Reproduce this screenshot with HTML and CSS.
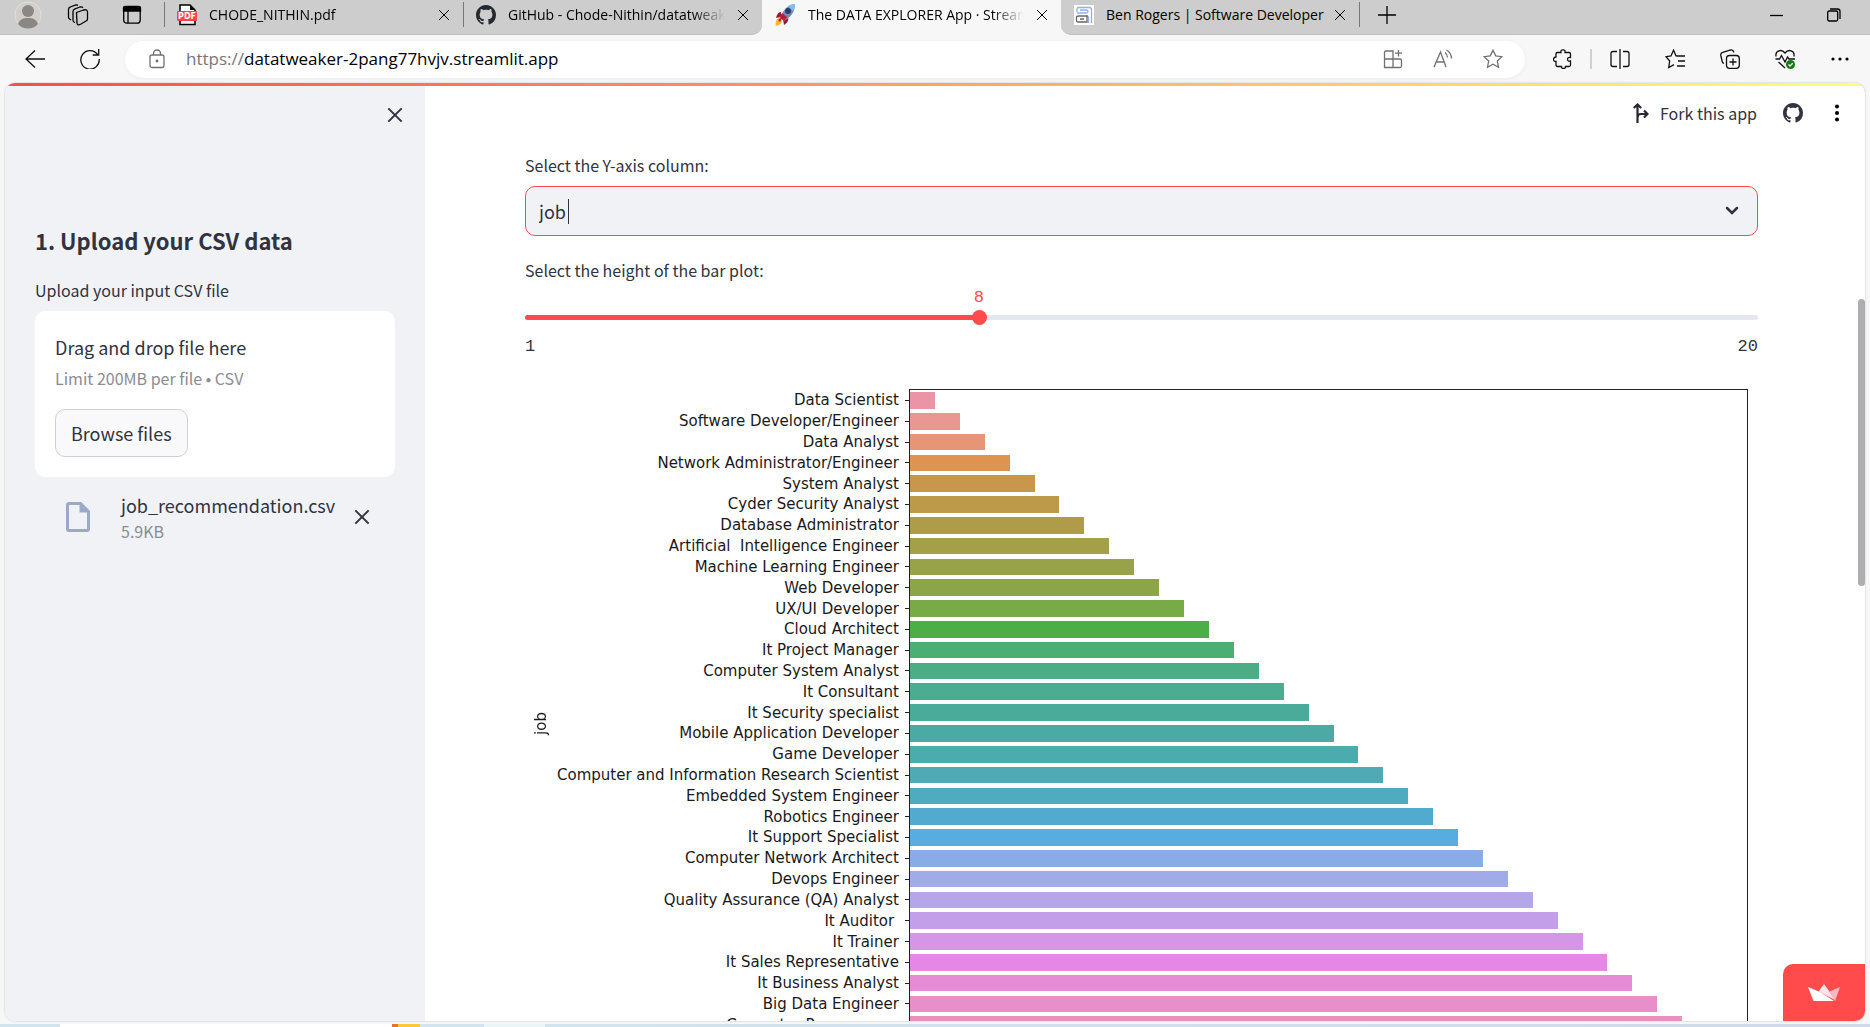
FILE: index.html
```html
<!DOCTYPE html>
<html lang="en">
<head>
<meta charset="utf-8">
<title>The DATA EXPLORER App · Streamlit</title>
<link rel="stylesheet" href="styles.css">
</head>
<body>
<svg class="defs" aria-hidden="true">
  <symbol id="github" viewBox="0 0 16 16"><path d="M8 0C3.58 0 0 3.58 0 8c0 3.54 2.29 6.53 5.47 7.59.4.07.55-.17.55-.38 0-.19-.01-.82-.01-1.49-2.01.37-2.53-.49-2.69-.94-.09-.23-.48-.94-.82-1.13-.28-.15-.68-.52-.01-.53.63-.01 1.08.58 1.23.82.72 1.21 1.87.87 2.33.66.07-.52.28-.87.51-1.07-1.78-.2-3.64-.89-3.64-3.95 0-.87.31-1.59.82-2.15-.08-.2-.36-1.02.08-2.12 0 0 .67-.21 2.2.82.64-.18 1.32-.27 2-.27s1.36.09 2 .27c1.53-1.04 2.2-.82 2.2-.82.44 1.1.16 1.92.08 2.12.51.56.82 1.27.82 2.15 0 3.07-1.87 3.75-3.65 3.95.29.25.54.73.54 1.48 0 1.07-.01 1.93-.01 2.2 0 .21.15.46.55.38A8.01 8.01 0 0 0 16 8c0-4.42-3.58-8-8-8z"/></symbol>
  <symbol id="cross" viewBox="0 0 12 12"><path d="M1 1l10 10M11 1L1 11" fill="none" stroke="currentColor"/></symbol>
</svg>

<header class="tabstrip">
  <div class="strip strip-left">
    <button class="strip-icon" aria-label="Profile">
      <svg width="28" height="28" viewBox="0 0 28 28"><circle cx="14" cy="14" r="13" fill="#d2cfcb" stroke="#e2e0dc"/><circle cx="14" cy="10" r="6" fill="#8b8784"/><path d="M4 23c2-5 5-6 10-6s8 1 10 6c-5 6-15 6-20 0z" fill="#8b8784"/></svg>
    </button>
    <button class="strip-icon" aria-label="Workspaces">
      <svg class="line" width="22" height="22" viewBox="0 0 22 22"><path d="M9.500 8.500l7-2.500q4-1 4 2v7q0 1.500-1.500 2l-5 3q-4 2-4-1z"/><path d="M8 18.500l-1-.5q-1-.6-1-2V7.500q0-2 2-2.700L13 3q2-.5 3 .7M4 16l-1.500-1q-1-.6-1-2V5.500q0-2 2-2.700L8.500 1q1.500-.4 2.500.4"/></svg>
    </button>
    <button class="strip-icon" aria-label="Tab actions">
      <svg class="line" width="20" height="20" viewBox="0 0 20 20"><rect x="1.700" y="1.700" width="16.500" height="16.500" rx="3"/><path d="M1.500 2.500q0-1 2-1h13q2 0 2 1V6h-17z" fill="#000"/><path d="M6 6v12"/></svg>
    </button>
    <nav class="tabs" aria-label="Tabs">
      <div class="tab">
        <svg width="20" height="22" viewBox="0 0 20 22"><path d="M3 1h10l5 5v14.500H3z" fill="#fff" stroke="#000" stroke-width="1.500"/><path d="M13 1v5h5z" fill="#000"/><rect y="7" width="20" height="10" rx="1" fill="#ff4342"/><text x="10" y="15" class="pdf-mark">PDF</text></svg>
        <a href="#pdf">CHODE_NITHIN.pdf</a>
        <button aria-label="Close tab"><svg width="12" height="12"><use href="#cross"/></svg></button>
      </div>
      <div class="tab">
        <svg width="20" height="20" fill="#24292f"><use href="#github"/></svg>
        <a href="#github-tab">GitHub - Chode-Nithin/datatweaker</a>
        <button aria-label="Close tab"><svg width="12" height="12"><use href="#cross"/></svg></button>
      </div>
    </nav>
  </div>
  <div class="tab tab-active">
    <svg width="22" height="24" viewBox="0 0 22 24"><path d="M2 23c-1-5 1-8 4-8l2 3c0 3-3 4-6 5z" fill="#ffb636"/><path d="M7 9c-3 0-4 3-5 6l5-1zM14 14c1 4-1 6-4 8l-1-6z" fill="#a0172c"/><path d="M21 1c-6 0-11 5-15 13l4 4c7-4 11-9 11-17z" fill="#6f8fb0"/><path d="M21 1c-3 0-5 1-7 2l5 5c1-2 2-4 2-7z" fill="#7fc0f0"/><path d="M6 14l2-4 5 4-3 4z" fill="#be1931"/><circle cx="14" cy="8" r="3" fill="#2b3b70"/><path d="M4 17l6-5-4 7z" fill="#be1931"/></svg>
    <a href="#app">The DATA EXPLORER App · Streamlit</a>
    <button aria-label="Close tab"><svg width="12" height="12"><use href="#cross"/></svg></button>
  </div>
  <div class="strip strip-right">
    <div class="tab tab-last">
      <svg width="20" height="20" viewBox="0 0 20 20"><path fill="#fff" d="M0 0h20v20H0z"/><g fill="none" stroke="#8fb0ee" stroke-width="1.300"><path d="M3 7V4q0-1.500 2-1.500h10q2.500 0 2.500 2V18M14.500 18v-5q0-2-2-2M3 8h9q2 0 2-1.500T12 5H6"/></g><path d="M5 11h8v6H4q-1.500 0-1.500-1.500v-3Q2.500 11 5 11zm1 3h4" fill="none" stroke="#666" stroke-width="1.300"/></svg>
      <a href="#ben">Ben Rogers | Software Developer</a>
      <button aria-label="Close tab"><svg width="12" height="12"><use href="#cross"/></svg></button>
    </div>
    <button class="new-tab" aria-label="New tab"><svg class="line" width="18" height="18" viewBox="0 0 18 18"><path d="M9 0v18M0 9h18"/></svg></button>
    <div class="window-controls">
      <button aria-label="Minimize"><svg class="line" width="14" height="14" viewBox="0 0 14 14"><path d="M0 7.500h13"/></svg></button>
      <button aria-label="Restore"><svg class="line" width="14" height="14" viewBox="0 0 14 14"><rect x=".7" y="3" width="10" height="10" rx="1.500"/><path d="M3 1h7.500Q13 1 13 3.500V11"/></svg></button>
    </div>
  </div>
</header>

<div class="toolbar">
  <button class="tool" aria-label="Back"><svg class="line" width="20" height="20" viewBox="0 0 20 20"><path d="M20 10H1M10 1.500L1 10l9 8.500"/></svg></button>
  <button class="tool" aria-label="Refresh"><svg class="line" width="20" height="20" viewBox="0 0 20 20"><path d="M17.500 5.500A9.200 9.200 0 1 0 19.200 10M18.700 0v6h-6"/></svg></button>
  <form class="address">
    <svg class="line" width="16" height="20" viewBox="0 0 16 20"><rect x="1" y="6" width="14" height="12.500" rx="2"/><path d="M4.500 6V4.500a3.500 3.500 0 0 1 7 0V6"/><circle cx="8" cy="12" r=".8" fill="currentColor"/></svg>
    <a class="url" href="#app"><span>https://</span>datatweaker-2pang77hvjv.streamlit.app</a>
    <button type="button" aria-label="Install app"><svg class="line" width="20" height="20" viewBox="0 0 20 20"><path d="M1.500 18.500v-15q0-1.500 1.500-1.500h7v16.500zM1.500 10H17q1.500 0 1.500 1.500V17q0 1.500-1.500 1.500H3q-1.500 0-1.500-1.500M15.500 1v6.500M12 4.200h7"/></svg></button>
    <button type="button" aria-label="Read aloud"><svg class="line" width="20" height="20" viewBox="0 0 20 20"><path d="M1 18L7.500 3 13 18M3.200 13h8.300M12 3.500q2.500 2 2.500 5M13.500 1q5 3 5 8.500"/></svg></button>
    <button type="button" aria-label="Favorite"><svg class="line" width="20" height="20" viewBox="0 0 20 20"><path d="M10 1.200l2.700 5.700 6.200.8-4.600 4.300 1.200 6.200-5.500-3-5.500 3L5.700 12 1.100 7.700l6.200-.8z"/></svg></button>
  </form>
  <button class="tool" aria-label="Extensions"><svg class="line" width="20" height="20" viewBox="0 0 20 20"><path d="M4 3.500h4q-.5-2.700 2-2.700t2 2.700h4q1.500 0 1.500 1.500v3.500q-3-.5-3 1.800t3 1.700V16q0 1.500-1.500 1.500h-3.500q.2 2-2 2t-2-2H4.500Q3 17.500 3 16v-3.500q-2.500 0-2.500-2.200T3 8V5q0-1.500 1-1.500z"/></svg></button>
  <span class="divider"></span>
  <button class="tool" aria-label="Split screen"><svg class="line" width="20" height="20" viewBox="0 0 20 20"><path d="M10 0v20M7 2.500H3Q1 2.500 1 4.500v11q0 2 2 2h4M13 2.500h4q2 0 2 2v11q0 2-2 2h-4"/></svg></button>
  <button class="tool" aria-label="Favorites"><svg class="line" width="20" height="20" viewBox="0 0 20 20"><path d="M13 7l-2-.2-2.500-5.600L6 6.900 1 7.700 4.700 12l-1 6.500L9 15.600M13 7h7M13 12h7M12 17h8"/></svg></button>
  <button class="tool" aria-label="Collections"><svg class="line" width="20" height="20" viewBox="0 0 20 20"><rect x="6.500" y="6.500" width="12.800" height="12.800" rx="3"/><path d="M13 9.500v7M9.500 13h7M4 14.500Q2.500 14 2.200 12.500L.8 6.500Q.3 4 2.700 3.300l8-2.300q2.300-.5 3.200 2.500"/></svg></button>
  <button class="tool" aria-label="Browser essentials"><svg class="line" width="20" height="20" viewBox="0 0 20 20"><path d="M.5 10h4l2-3.500L10 13l2.500-5 1.500 2h6M1 7.500C0 1.500 6.500-.5 10 4c3.500-4.500 10-2.500 9 3.500M3.500 13l6.500 6"/><circle cx="15.500" cy="15.500" r="4.500" fill="#107c10" stroke="none"/><path d="M13.500 15.500l1.500 1.500 2.700-2.700" stroke="#fff"/></svg></button>
  <button class="tool" aria-label="Settings and more"><svg width="18" height="4" viewBox="0 0 18 4"><circle cx="2" cy="2" r="1.600"/><circle cx="9" cy="2" r="1.600"/><circle cx="16" cy="2" r="1.600"/></svg></button>
</div>

<div class="viewport">
  <div class="decoration"></div>
  <aside class="sidebar">
    <button class="sidebar-close" aria-label="Close sidebar"><svg class="bold" width="16" height="16"><use href="#cross"/></svg></button>
    <h2>1. Upload your CSV data</h2>
    <label for="browse">Upload your input CSV file</label>
    <section class="dropzone">
      <p>Drag and drop file here</p>
      <small>Limit 200MB per file • CSV</small>
      <button id="browse">Browse files</button>
    </section>
    <div class="file">
      <svg width="24" height="30" viewBox="0 0 24 30"><path d="M3 1.500h11.500l8 8V27q0 1.500-1.500 1.500H3Q1.500 28.500 1.500 27V3Q1.500 1.500 3 1.500z" fill="none" stroke="#9aa9c8" stroke-width="3"/><path d="M13.500 1v9.500H23z" fill="#9aa9c8"/></svg>
      <div class="file-name">
        <p>job_recommendation.csv</p>
        <small>5.9KB</small>
      </div>
      <button aria-label="Remove file"><svg class="bold" width="16" height="16"><use href="#cross"/></svg></button>
    </div>
  </aside>

  <main>
    <div class="app-bar">
      <a href="#fork"><svg width="16" height="20" viewBox="0 0 16 20"><path d="M4.500 20V2M.8 5l3.700-3.500L8.200 5M4.500 14.500q0-3.500 3.500-3.500h6M11 7.500l3.500 3.500-3.500 3.500" fill="none" stroke="#262730" stroke-width="2.200"/></svg>Fork this app</a>
      <a href="#source" aria-label="View source"><svg width="20" height="20"><use href="#github"/></svg></a>
      <button aria-label="Menu"><svg width="6" height="18" viewBox="0 0 6 18"><circle cx="3" cy="2.500" r="2"/><circle cx="3" cy="9" r="2"/><circle cx="3" cy="15.500" r="2"/></svg></button>
    </div>

    <div class="content">
      <label for="y-axis">Select the Y-axis column:</label>
      <div class="select">
        <select id="y-axis"><option>job</option></select>
        <span class="caret"></span>
        <svg width="14" height="10" viewBox="0 0 14 10"><path d="M2 2l5 5 5-5" fill="none" stroke="#31333f" stroke-width="2.500" stroke-linecap="round"/></svg>
      </div>

      <label for="height">Select the height of the bar plot:</label>
      <div class="slider">
        <output for="height">8</output>
        <input id="height" type="range" min="1" max="20" value="8">
      </div>
      <div class="slider-ends"><span>1</span><span>20</span></div>

      <figure class="plot">
        <figcaption>job</figcaption>
        <ol class="names">
          <li>Data Scientist</li>
          <li>Software Developer/Engineer</li>
          <li>Data Analyst</li>
          <li>Network Administrator/Engineer</li>
          <li>System Analyst</li>
          <li>Cyder Security Analyst</li>
          <li>Database Administrator</li>
          <li>Artificial  Intelligence Engineer</li>
          <li>Machine Learning Engineer</li>
          <li>Web Developer</li>
          <li>UX/UI Developer</li>
          <li>Cloud Architect</li>
          <li>It Project Manager</li>
          <li>Computer System Analyst</li>
          <li>It Consultant</li>
          <li>It Security specialist</li>
          <li>Mobile Application Developer</li>
          <li>Game Developer</li>
          <li>Computer and Information Research Scientist</li>
          <li>Embedded System Engineer</li>
          <li>Robotics Engineer</li>
          <li>It Support Specialist</li>
          <li>Computer Network Architect</li>
          <li>Devops Engineer</li>
          <li>Quality Assurance (QA) Analyst</li>
          <li>It Auditor </li>
          <li>It Trainer</li>
          <li>It Sales Representative</li>
          <li>It Business Analyst</li>
          <li>Big Data Engineer</li>
          <li>Computer Programmer</li>
        </ol>
        <div class="bars">
          <i style="width:2.98%;background:#eb94a5"></i>
          <i style="width:5.95%;background:#ea9691"></i>
          <i style="width:8.93%;background:#e69577"></i>
          <i style="width:11.9%;background:#de944e"></i>
          <i style="width:14.88%;background:#c9974c"></i>
          <i style="width:17.86%;background:#bc9a4a"></i>
          <i style="width:20.83%;background:#af9c49"></i>
          <i style="width:23.81%;background:#a49f49"></i>
          <i style="width:26.79%;background:#98a248"></i>
          <i style="width:29.76%;background:#8ca647"></i>
          <i style="width:32.74%;background:#78ab47"></i>
          <i style="width:35.71%;background:#4caf45"></i>
          <i style="width:38.69%;background:#4bae72"></i>
          <i style="width:41.67%;background:#4aad85"></i>
          <i style="width:44.64%;background:#4aac91"></i>
          <i style="width:47.62%;background:#4aab9b"></i>
          <i style="width:50.6%;background:#4baba4"></i>
          <i style="width:53.57%;background:#4cabac"></i>
          <i style="width:56.55%;background:#4eabb5"></i>
          <i style="width:59.52%;background:#4fabc0"></i>
          <i style="width:62.5%;background:#52abce"></i>
          <i style="width:65.48%;background:#58acdf"></i>
          <i style="width:68.45%;background:#88ade6"></i>
          <i style="width:71.43%;background:#a2abe9"></i>
          <i style="width:74.4%;background:#b5a6ea"></i>
          <i style="width:77.38%;background:#c49fe9"></i>
          <i style="width:80.36%;background:#d496e6"></i>
          <i style="width:83.33%;background:#e588e5"></i>
          <i style="width:86.31%;background:#e68bd6"></i>
          <i style="width:89.29%;background:#e88ec9"></i>
          <i style="width:92.26%;background:#e991be"></i>
        </div>
      </figure>
    </div>
    <a class="badge" href="#streamlit" aria-label="Hosted with Streamlit"><svg width="34" height="18" viewBox="0 0 34 18"><path d="M1 3l12 5 14 9H6.500z" fill="#fff"/><path d="M11.500 7.500L17 0l5.500 7.500L28 16z" fill="#ffe1e8"/><path d="M22.500 7.500L33 3l-5 14z" fill="#ffb8c2"/></svg></a>
    <span class="scroll-thumb"></span>
  </main>
</div>
<div class="desktop-edge"></div>
</body>
</html>
```
FILE: styles.css
```css
* { box-sizing: border-box; }

body {
  margin: 0;
  height: 100vh;
  display: flex;
  flex-direction: column;
  overflow: hidden;
  background: #f7f7f7;
  color: #31333f;
  font-family: "Noto Sans CJK JP", "Noto Sans", sans-serif;
  font-size: 16px;
  line-height: 24px;
}

button {
  display: flex;
  align-items: center;
  justify-content: center;
  padding: 0;
  border: 0;
  background: none;
  color: inherit;
  font: inherit;
}

a { color: inherit; text-decoration: none; }
p, h2, ol, figure { margin: 0; padding: 0; }
svg { display: block; flex: none; }
.defs { position: absolute; width: 0; height: 0; }
.line { fill: none; stroke: currentColor; stroke-width: 1.3px; }
.bold { stroke-width: 1.5px; }
.pdf-mark { fill: #fff; font: bold 8px "DejaVu Sans", sans-serif; text-anchor: middle; }

/* Browser tabs */
.tabstrip {
  display: flex;
  height: 35px;
  color: #000;
  font-family: "Open Sans", "Noto Sans", sans-serif;
  font-size: 14px;
}
.strip {
  display: flex;
  align-items: center;
  height: 35px;
  padding-bottom: 5px;
  background: #cdcdcd;
  border-bottom: 1px solid #c0c0c0;
}
.strip-left { border-bottom-right-radius: 10px; }
.strip-right { flex: 1; border-bottom-left-radius: 10px; }
.strip-icon { width: 52px; }
.strip-icon:first-child { width: 56px; justify-content: flex-start; padding-left: 14px; }
.strip-icon:nth-child(2) { width: 43px; }
.strip-icon:nth-child(3) { width: 65px; }
.tabs { display: flex; }
.tab {
  display: flex;
  align-items: center;
  width: 299px;
  height: 25px;
  padding: 0 13px 0 12px;
  border-left: 1px solid #777;
}
.tab a {
  flex: 1;
  min-width: 0;
  margin: 0 12px;
  overflow: hidden;
  white-space: nowrap;
  mask-image: linear-gradient(to right, #000 calc(100% - 32px), transparent);
}
.tab-active { height: 30px; border: 0; }
.tab-last { border-left-color: transparent; border-right: 1px solid #777; }
.tab-last a { mask-image: none; margin: 0 0 0 12px; }
.new-tab { width: 54px; }
.window-controls { display: flex; margin-left: auto; padding-right: 8px; }
.window-controls button { width: 57px; }

/* Address bar */
.toolbar {
  display: flex;
  align-items: center;
  height: 48px;
  padding: 0 3px 0 7px;
  color: #111;
}
.tool { width: 55px; height: 40px; }
.address {
  display: flex;
  flex: 1;
  align-items: center;
  height: 37px;
  margin: 0 10px 0 8px;
  padding: 0 7px 0 24px;
  border-radius: 19px;
  background: #fff;
  box-shadow: 0 1px 4px #0000000d;
  color: #707070;
}
.address button { width: 50px; }
.url {
  flex: 1;
  margin-left: 21px;
  color: #000;
  font-family: "Open Sans", "Noto Sans", sans-serif;
  font-size: 17px;
}
.url span { color: #767676; }
.divider { width: 2px; height: 20px; background: #d0d0d0; }

/* Page area */
.viewport {
  position: relative;
  display: flex;
  flex: 1;
  min-height: 0;
  margin: 0 5px 3px;
  overflow: hidden;
  border-radius: 10px;
  background: #fff;
  box-shadow: 0 0 2px #00000040;
}
.decoration {
  position: absolute;
  inset: 0 0 auto;
  height: 3px;
  background: linear-gradient(to right, #ff4b4b, #fffd80);
}
.sidebar {
  flex: none;
  width: 420px;
  padding: 22px 30px 0;
  background: #f0f2f6;
}
.sidebar-close { width: 20px; height: 20px; margin: 0 -10px 0 auto; }
.sidebar h2 { margin: 99px 0 22px; font-size: 22px; font-weight: 700; line-height: 32px; }
.sidebar label { display: block; margin-bottom: 9px; }
.dropzone {
  padding: 22px 20px 20px;
  border-radius: 10px;
  background: #fff;
}
p { font-size: 18px; line-height: 28px; }
small { display: block; color: #8b8c93; font-size: 16px; line-height: 24px; }
.dropzone small { margin: 5px 0 19px; }
.dropzone button {
  height: 48px;
  padding: 0 15px;
  border: 1px solid #d0d1d6;
  border-radius: 10px;
  background: #f9f9fb;
  font-size: 18px;
}
.file { display: flex; align-items: center; padding: 14px 25px 0 31px; }
.file-name { flex: 1; margin-left: 31px; }
.file button { width: 16px; height: 16px; }

main { position: relative; flex: 1; overflow: hidden; }
.app-bar {
  display: flex;
  align-items: center;
  justify-content: flex-end;
  height: 58px;
  padding: 2px 25px 0 0;
}
.app-bar a { display: flex; align-items: center; gap: 11px; margin-right: 26px; fill: #31333f; }
.app-bar a + a { margin-right: 31px; }
.content { padding: 12px 107px 0 100px; }
.content label { display: block; }

.select { position: relative; margin: 9px 0 22px; }
.select select {
  display: block;
  width: 100%;
  height: 50px;
  padding: 0 13px;
  appearance: none;
  border: 1px solid #ff4b4b;
  border-radius: 10px;
  background: #f0f2f6;
  color: #31333f;
  font: 18px "Noto Sans CJK JP", "Noto Sans", sans-serif;
}
.select .caret { position: absolute; top: 13px; left: 43px; width: 1px; height: 25px; background: #31333f; }
.select svg { position: absolute; top: 20px; right: 19px; pointer-events: none; }

.slider {
  position: relative;
  height: 5px;
  margin: 33px 0 15px;
  border-radius: 3px;
  background: linear-gradient(to right, #ff4b4b 36.8%, #e4e7ef 36.8%);
}
.slider output {
  position: absolute;
  bottom: 10px;
  left: 36.8%;
  transform: translateX(-50%);
  color: #ff4b4b;
}
.slider output, .slider-ends { font-family: "Liberation Mono", monospace; font-size: 17px; }
.slider input {
  display: block;
  width: calc(100% + 14px);
  height: 5px;
  margin: 0 -7px;
  appearance: none;
  background: none;
}
.slider input::-webkit-slider-thumb {
  width: 15px;
  height: 15px;
  appearance: none;
  border-radius: 50%;
  background: #ff4b4b;
}
.slider-ends { display: flex; justify-content: space-between; }

/* Bar plot */
.plot {
  display: flex;
  height: 668px;
  margin: 30px 10px 0 0;
  color: #1a1a1a;
  font-family: "DejaVu Sans", sans-serif;
  font-size: 15px;
}
.plot figcaption {
  align-self: center;
  width: 32px;
  writing-mode: vertical-rl;
  line-height: 32px;
  transform: rotate(180deg);
}
.names {
  display: grid;
  grid-template-rows: repeat(32, 1fr);
  width: 352px;
  padding: 1px 0;
  list-style: none;
  text-align: right;
  white-space: pre;
}
.names li { display: flex; align-items: center; justify-content: flex-end; min-height: 0; line-height: 20px; }
.names li::after { content: ""; width: 5px; height: 1px; margin-left: 6px; background: #222; }
.bars {
  display: grid;
  flex: 1;
  grid-template-rows: repeat(32, 1fr);
  align-items: center;
  border: 1px solid #222;
}
.bars i { height: 80%; }

.badge {
  position: absolute;
  right: 0;
  bottom: 0;
  display: flex;
  align-items: center;
  justify-content: center;
  width: 82px;
  height: 57px;
  border-top-left-radius: 10px;
  background: #ff4b4b;
}
.scroll-thumb {
  position: absolute;
  top: 23%;
  right: 0;
  width: 7px;
  height: 287px;
  border-radius: 4px;
  background: #adadb2;
}

.desktop-edge {
  height: 3px;
  background: linear-gradient(to right, #d2e4ee 60px, #fff 60px 392px, #e37626 392px 398px, #fbc937 398px 420px, #d2e4ee 420px 484px, #eaf5f8 484px 545px, #d2e4ee 545px, #d0daea);
}
```
